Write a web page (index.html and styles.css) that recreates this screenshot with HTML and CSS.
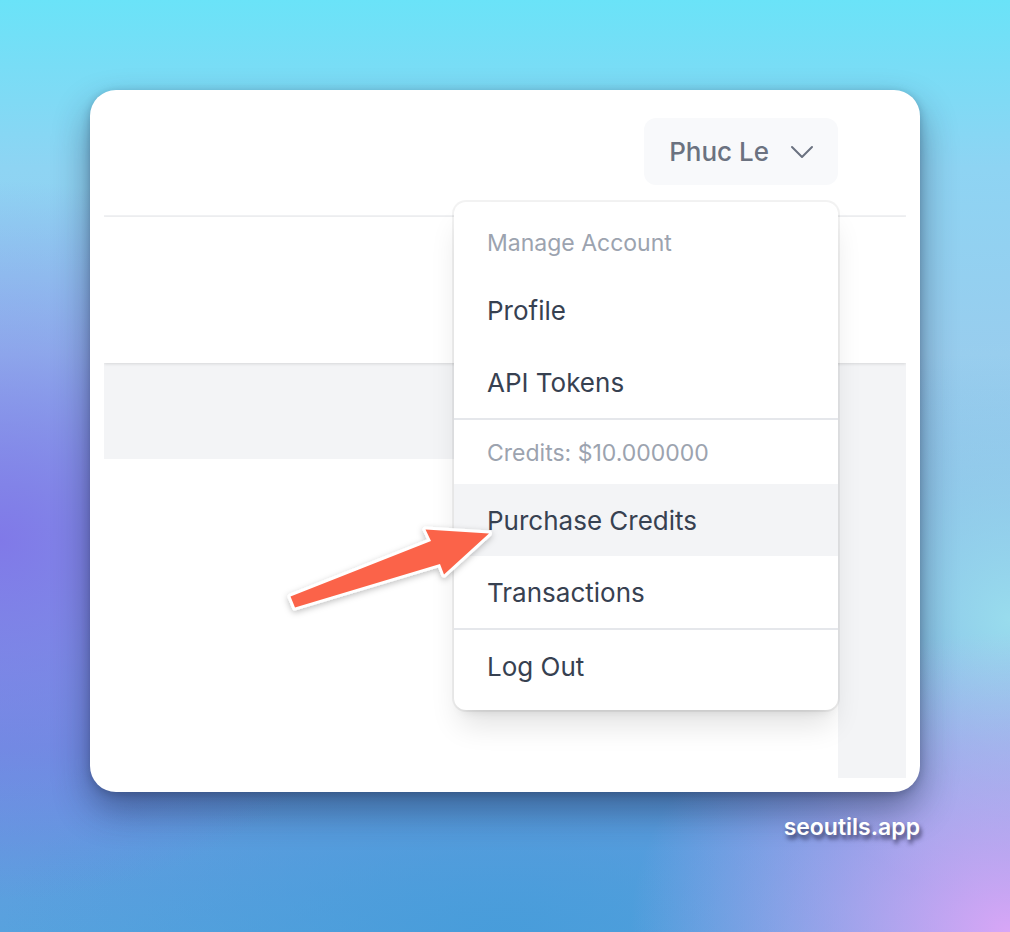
FILE: index.html
```html
<!DOCTYPE html>
<html lang="en">
<head>
    <meta charset="UTF-8">
    <meta name="viewport" content="width=device-width, initial-scale=1.0">
    <title>Purchase Credits</title>
    <link rel="stylesheet" href="styles.css">
</head>
<body>
    <div class="card">
        <div class="screen">
            <nav class="topnav">
                <button class="user-btn">
                    <span>Phuc Le</span>
                    <svg class="chevron" viewBox="0 0 24 24" fill="none" stroke="currentColor" stroke-width="1.5">
                        <path stroke-linecap="round" stroke-linejoin="round" d="M19.5 8.25l-7.5 7.5-7.5-7.5"/>
                    </svg>
                </button>
            </nav>
            <header class="page-header"></header>
            <main class="main">
                <div class="panel"></div>
            </main>

            <!-- dropdown open over the page -->
            <div class="dropdown">
                <div class="dd-label">Manage Account</div>
                <a href="#" class="dd-link">Profile</a>
                <a href="#" class="dd-link">API Tokens</a>
                <div class="dd-sep"></div>
                <div class="dd-label">Credits: $10.000000</div>
                <a href="#" class="dd-link hover">Purchase Credits</a>
                <a href="#" class="dd-link">Transactions</a>
                <div class="dd-sep"></div>
                <a href="#" class="dd-link">Log Out</a>
            </div>
        </div>
    </div>
    <div class="brand">seoutils.app</div>

    <svg class="annot" viewBox="0 0 1010 932" width="1010" height="932">
        <defs>
            <filter id="drop" x="-20%" y="-30%" width="140%" height="160%">
                <feDropShadow dx="0" dy="2" stdDeviation="3" flood-color="#000" flood-opacity="0.25"/>
            </filter>
        </defs>
        <polygon filter="url(#drop)" fill="#fb6448" stroke="#fff" stroke-width="6" stroke-linejoin="round" paint-order="stroke"
            points="290.5,596.5 431,541 425.5,529.5 489,533.5 444,574.5 440,564 295,607.5"/>
    </svg>
</body>
</html>
```

FILE: styles.css
```css
body {
    margin: 0;
    width: 1010px;
    height: 932px;
    overflow: hidden;
    position: relative;
    font-family: Inter, "Noto Sans", sans-serif;
    background:
        radial-gradient(ellipse 420px 360px at 0px 540px, rgba(128, 118, 232, 0.95), rgba(128, 118, 232, 0) 100%),
        radial-gradient(ellipse 380px 300px at 1010px 932px, rgba(216, 166, 246, 1), rgba(216, 166, 246, 0) 100%),
        radial-gradient(ellipse 260px 280px at 1010px 620px, rgba(156, 226, 238, 0.9), rgba(156, 226, 238, 0) 100%),
        radial-gradient(ellipse 500px 220px at 500px 932px, rgba(70, 156, 218, 0.9), rgba(70, 156, 218, 0) 100%),
        linear-gradient(180deg, #6ae3f8 0%, #8ed4f3 18%, #98cdee 38%, #8ab8e8 52%, #6a96e0 80%, #58a2de 100%);
}

.card {
    margin: 90px 0 0 90px;
    width: 830px;
    height: 702px;
    box-sizing: border-box;
    padding: 14px;
    background: #fff;
    border-radius: 26px;
    box-shadow: 0 18px 36px rgba(20, 30, 60, 0.45), 0 2px 8px rgba(20, 30, 60, 0.25);
}

.screen {
    position: relative;
    height: 674px;
    display: flex;
    flex-direction: column;
    overflow: hidden;
}

.topnav {
    flex: none;
    display: flex;
    justify-content: flex-end;
    align-items: flex-start;
    padding: 14px 68px 0 0;
    box-sizing: border-box;
    border-bottom: 2px solid #f1f2f4;
    height: 113px;
}

.user-btn {
    display: inline-flex;
    align-items: center;
    height: 67px;
    padding: 0 24px 0 25px;
    border: 0;
    border-radius: 12px;
    background: #f8f9fb;
    color: #6b7280;
    font-family: inherit;
    font-size: 26px;
    font-weight: 500;
}

.chevron {
    width: 32px;
    height: 32px;
    margin-left: 17px;
    margin-right: -4px;
}

.page-header {
    height: 146px;
    flex: none;
    background: #fff;
    box-shadow: 0 1px 3px rgba(0, 0, 0, 0.12);
    position: relative;
    z-index: 1;
}

.main {
    flex: 1;
    background: #f3f4f6;
    padding-top: 96px;
}

.panel {
    width: 734px;
    height: 100%;
    background: #fff;
}

.dropdown {
    position: absolute;
    left: 350px;
    top: 98px;
    width: 384px;
    padding: 8px 0;
    background: #fff;
    border-radius: 12px;
    box-shadow: 0 0 0 2px rgba(0, 0, 0, 0.05), 0 20px 30px -6px rgba(0, 0, 0, 0.12), 0 8px 12px -8px rgba(0, 0, 0, 0.12);
    z-index: 5;
}

.dd-label {
    padding: 17px 33px 15px;
    line-height: 32px;
    font-size: 23px;
    color: #9ca3af;
}

.dd-link {
    display: block;
    padding: 17px 33px 15px;
    line-height: 40px;
    font-size: 26px;
    color: #374151;
    text-decoration: none;
}

.dd-link.hover { background: #f3f4f6; }

.dd-sep {
    border-top: 2px solid #e5e7eb;
}

.brand {
    width: 830px;
    margin: 22px 0 0 90px;
    text-align: right;
    color: #fff;
    font-size: 23px;
    line-height: 26px;
    font-weight: 600;
    text-shadow: 2px 4px 4px rgba(30, 30, 60, 0.75);
}

.annot {
    position: absolute;
    left: 0;
    top: 0;
    z-index: 10;
    pointer-events: none;
}
```
